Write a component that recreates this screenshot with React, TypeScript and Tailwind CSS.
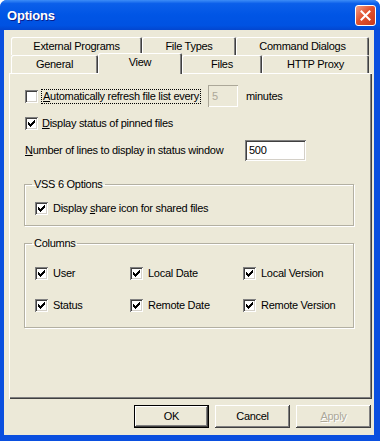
import type { ReactNode } from 'react'

// Classic XP "Options" property sheet

const sunken =
  'shadow-[inset_1px_1px_#808080,inset_-1px_-1px_#ffffff,inset_2px_2px_#404040,inset_-2px_-2px_#d4d0c8]'

function Check({ checked }: { checked?: boolean }) {
  return (
    <span className={`block h-[13px] w-[13px] shrink-0 bg-white ${sunken}`}>
      {checked && (
        <svg width="13" height="13" viewBox="0 0 13 13" shapeRendering="crispEdges" className="block">
          <path d="M3 5h1v3H3zM4 6h1v3H4zM5 7h1v3H5zM6 6h1v3H6zM7 5h1v3H7zM8 4h1v3H8zM9 3h1v3H9z" fill="#000" />
        </svg>
      )}
    </span>
  )
}

function Tab({ label, w, selected }: { label: string; w: string; selected?: boolean }) {
  return (
    <div
      className={`${w} flex items-center justify-center rounded-t-[2px] bg-[#ece9d8] shadow-[inset_1px_1px_#ffffff,inset_-1px_0_#404040,inset_-2px_0_#808080] ${
        selected ? 'relative z-10 mb-[-1px] h-[21px] pb-[2px]' : 'h-[18px]'
      }`}
    >
      {label}
    </div>
  )
}

function Button({ children, def, disabled }: { children: ReactNode; def?: boolean; disabled?: boolean }) {
  return (
    <div
      className={`flex h-[23px] w-[75px] items-center justify-center bg-[#ece9d8] ${
        def
          ? 'border border-black shadow-[inset_-1px_-1px_#404040,inset_1px_1px_#ffffff,inset_-2px_-2px_#808080]'
          : 'shadow-[inset_-1px_-1px_#404040,inset_1px_1px_#ffffff,inset_-2px_-2px_#808080]'
      } ${disabled ? 'text-[#aca899] [text-shadow:1px_1px_#ffffff]' : 'text-black'}`}
    >
      {children}
    </div>
  )
}

function Item({ label, checked = true }: { label: ReactNode; checked?: boolean }) {
  return (
    <div className="flex h-[16px] items-center">
      <Check checked={checked} />
      <span className="ml-[5px]">{label}</span>
    </div>
  )
}

export default function App() {
  return (
    <div className="flex h-[441px] w-[380px] flex-col overflow-hidden rounded-t-[7px] bg-[#0a4fdf] font-['Liberation_Sans',Arial,sans-serif] text-[11px] leading-[13px] tracking-[-0.28px] text-black">
      {/* Title bar */}
      <div className="flex h-[30px] shrink-0 items-center bg-[linear-gradient(180deg,#3d8df7_0%,#0b5fea_12%,#0055e5_50%,#0052e2_85%,#0346cf_100%)] pl-[7px]">
        <span className="text-[13px] font-bold tracking-[-0.2px] text-white [text-shadow:1px_1px_#0a1e8a]">Options</span>
        <div className="ml-auto mr-[4px] flex h-[21px] w-[21px] items-center justify-center rounded-[3px] border border-white bg-[linear-gradient(135deg,#f0a08a_0%,#e2532f_45%,#c8391a_100%)]">
          <svg width="11" height="11" viewBox="0 0 11 11">
            <path d="M1.5 1.5l8 8M9.5 1.5l-8 8" stroke="#fff" strokeWidth="2" strokeLinecap="square" />
          </svg>
        </div>
      </div>

      {/* Client area */}
      <div className="ml-[4px] mr-[6px] mb-[6px] flex flex-1 flex-col bg-[#ece9d8] pt-[7px] pl-[5px] pr-[2px]">
        {/* Tabs */}
        <div className="ml-[2px] flex h-[18px] items-end">
          <Tab label="External Programs" w="w-[131px]" />
          <Tab label="File Types" w="w-[94px]" />
          <Tab label="Command Dialogs" w="w-[133px]" />
        </div>
        <div className="ml-[2px] flex h-[18px] items-end">
          <Tab label="General" w="w-[87px]" />
          <Tab label="View" w="w-[84px]" selected />
          <Tab label="Files" w="w-[80px]" />
          <Tab label="HTTP Proxy" w="w-[107px]" />
        </div>

        {/* Page */}
        <div className="flex h-[326px] w-[363px] flex-col bg-[#ece9d8] shadow-[inset_1px_1px_#ffffff,inset_-1px_-1px_#404040,inset_-2px_-2px_#808080]">
          <div className="mt-[12px] flex h-[22px] items-center pl-[16px]">
            <Check />
            <span className="ml-[3px] border border-dotted border-black px-[1px]">
              <u>A</u>utomatically refresh file list every
            </span>
            <div className="ml-[7px] flex h-[22px] w-[30px] items-center pl-[4px] text-[#aca899] shadow-[inset_1px_1px_#aca899,inset_-1px_-1px_#ffffff]">
              5
            </div>
            <span className="ml-[8px]">minutes</span>
          </div>

          <div className="mt-[8px] flex h-[16px] items-center pl-[16px]">
            <Check checked />
            <span className="ml-[4px]">
              <u>D</u>isplay status of pinned files
            </span>
          </div>

          <div className="mt-[9px] flex h-[21px] items-center pl-[16px]">
            <span className="w-[220px]">
              <u>N</u>umber of lines to display in status window
            </span>
            <div className={`flex h-[21px] w-[61px] items-center bg-white pl-[4px] ${sunken}`}>500</div>
          </div>

          <fieldset className="mt-[17px] ml-[15px] w-[330px] border border-[#b3b0a2] pb-[9px] pl-[10px] shadow-[inset_1px_1px_#ffffff,1px_1px_#ffffff]">
            <legend className="ml-[-3px] px-[2px]">VSS 6 Options</legend>
            <div className="mt-[9px]">
              <Item
                label={
                  <>
                    Display <u>s</u>hare icon for shared files
                  </>
                }
              />
            </div>
          </fieldset>

          <fieldset className="mt-[11px] ml-[15px] w-[330px] border border-[#b3b0a2] pb-[14px] pl-[10px] shadow-[inset_1px_1px_#ffffff,1px_1px_#ffffff]">
            <legend className="ml-[-3px] px-[2px]">Columns</legend>
            <div className="mt-[15px] grid grid-cols-[95px_113px_1fr] gap-y-[16px]">
              <Item label="User" />
              <Item label="Local Date" />
              <Item label="Local Version" />
              <Item label="Status" />
              <Item label="Remote Date" />
              <Item label="Remote Version" />
            </div>
          </fieldset>
        </div>

        {/* Buttons */}
        <div className="mt-[6px] flex justify-end gap-[6px] pr-[1px]">
          <Button def>OK</Button>
          <Button>Cancel</Button>
          <Button disabled>
            <u>A</u>pply
          </Button>
        </div>
      </div>
    </div>
  )
}
